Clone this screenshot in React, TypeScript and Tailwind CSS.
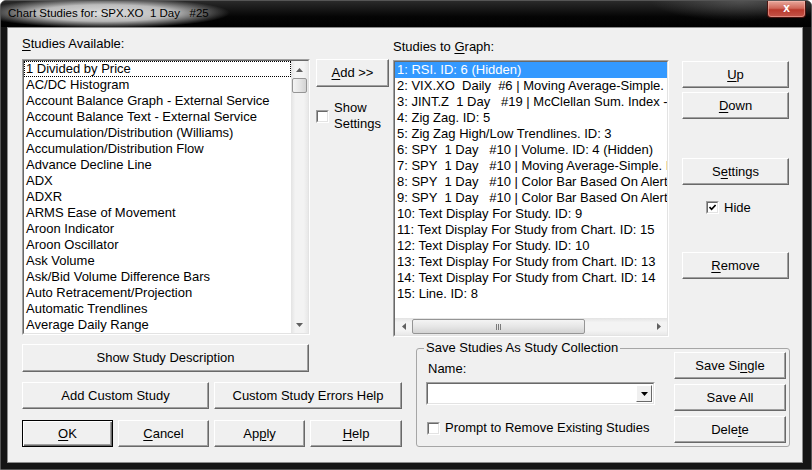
import type { ReactNode } from "react";

const AVAILABLE = [
  "1 Divided by Price",
  "AC/DC Histogram",
  "Account Balance Graph - External Service",
  "Account Balance Text - External Service",
  "Accumulation/Distribution (Williams)",
  "Accumulation/Distribution Flow",
  "Advance Decline Line",
  "ADX",
  "ADXR",
  "ARMS Ease of Movement",
  "Aroon Indicator",
  "Aroon Oscillator",
  "Ask Volume",
  "Ask/Bid Volume Difference Bars",
  "Auto Retracement/Projection",
  "Automatic Trendlines",
  "Average Daily Range",
  "Average True Range",
];

const GRAPHED = [
  "1: RSI. ID: 6 (Hidden)",
  "2: VIX.XO  Daily  #6 | Moving Average-Simple. ID: 7",
  "3: JINT.Z  1 Day   #19 | McClellan Sum. Index - Tick. ID: 11",
  "4: Zig Zag. ID: 5",
  "5: Zig Zag High/Low Trendlines. ID: 3",
  "6: SPY  1 Day   #10 | Volume. ID: 4 (Hidden)",
  "7: SPY  1 Day   #10 | Moving Average-Simple. ID: 2",
  "8: SPY  1 Day   #10 | Color Bar Based On Alert Condition. ID: 12",
  "9: SPY  1 Day   #10 | Color Bar Based On Alert Condition. ID: 16",
  "10: Text Display For Study. ID: 9",
  "11: Text Display For Study from Chart. ID: 15",
  "12: Text Display For Study. ID: 10",
  "13: Text Display For Study from Chart. ID: 13",
  "14: Text Display For Study from Chart. ID: 14",
  "15: Line. ID: 8",
];

// label with one underlined access-key letter
function Mn({ text, at }: { text: string; at?: number }) {
  if (at === undefined) return <>{text}</>;
  return (
    <>
      {text.slice(0, at)}
      <span className="underline underline-offset-[2px]">{text[at]}</span>
      {text.slice(at + 1)}
    </>
  );
}

function Btn({
  children,
  className = "",
  primary = false,
}: {
  children: ReactNode;
  className?: string;
  primary?: boolean;
}) {
  const edge = primary
    ? "border border-black shadow-[inset_1px_1px_0_#ffffff,inset_-1px_-1px_0_#696969,inset_-2px_-2px_0_#a0a0a0]"
    : "border border-t-white border-l-white border-r-[#696969] border-b-[#696969] shadow-[inset_-1px_-1px_0_#a0a0a0]";
  return (
    <button
      className={`flex shrink-0 items-center justify-center bg-[#f0f0f0] text-[13px] leading-[16px] text-black ${edge} ${className}`}
    >
      {children}
    </button>
  );
}

function Sunken({ className = "", children }: { className?: string; children?: ReactNode }) {
  return (
    <div
      className={`border border-t-[#a0a0a0] border-l-[#a0a0a0] border-r-white border-b-white ${className}`}
    >
      <div className="flex h-full w-full border border-t-[#696969] border-l-[#696969] border-r-[#e3e3e3] border-b-[#e3e3e3] bg-white">
        {children}
      </div>
    </div>
  );
}

function CheckBox({ checked = false }: { checked?: boolean }) {
  return (
    <div className="h-[13px] w-[13px] shrink-0 border border-t-[#a0a0a0] border-l-[#a0a0a0] border-r-white border-b-white">
      <div className="flex h-full w-full items-center justify-center border border-t-[#696969] border-l-[#696969] border-r-[#e3e3e3] border-b-[#e3e3e3] bg-white">
        {checked && (
          <svg width="7" height="7" viewBox="0 0 7 7">
            <path d="M0.5 3 L2.6 5.3 L6.6 1" fill="none" stroke="#000" strokeWidth="1.7" />
          </svg>
        )}
      </div>
    </div>
  );
}

function Arrow({ dir }: { dir: "up" | "down" | "left" | "right" }) {
  const d = {
    up: "M3.5 0 L7 4 H0 Z",
    down: "M0 0 H7 L3.5 4 Z",
    left: "M0 3.5 L4 0 V7 Z",
    right: "M0 0 L4 3.5 L0 7 Z",
  }[dir];
  const vertical = dir === "up" || dir === "down";
  return (
    <svg width={vertical ? 7 : 4} height={vertical ? 4 : 7} viewBox={vertical ? "0 0 7 4" : "0 0 4 7"}>
      <path d={d} fill="#606060" />
    </svg>
  );
}

function VScroll() {
  return (
    <div className="flex w-[17px] shrink-0 flex-col bg-[linear-gradient(to_right,#e3e3e3,#f3f3f3_25%,#f3f3f3_75%,#e8e8e8)]">
      <div className="flex h-[17px] items-center justify-center">
        <Arrow dir="up" />
      </div>
      <div className="mx-[1px] h-[15px] rounded-[2px] border border-[#959595] bg-[linear-gradient(to_right,#f4f4f4,#e6e6e6_50%,#d3d3d3)]" />
      <div className="flex-1" />
      <div className="flex h-[17px] items-center justify-center">
        <Arrow dir="down" />
      </div>
    </div>
  );
}

function HScroll() {
  return (
    <div className="flex h-[17px] shrink-0 bg-[linear-gradient(to_bottom,#e3e3e3,#f3f3f3_25%,#f3f3f3_75%,#e8e8e8)]">
      <div className="flex w-[17px] items-center justify-center">
        <Arrow dir="left" />
      </div>
      <div className="my-[1px] flex w-[173px] items-center justify-center gap-[1px] rounded-[2px] border border-[#959595] bg-[linear-gradient(to_bottom,#f4f4f4,#e6e6e6_50%,#d3d3d3)]">
        <span className="h-[6px] w-[1px] bg-[#7a7a7a]" />
        <span className="h-[6px] w-[1px] bg-[#7a7a7a]" />
        <span className="h-[6px] w-[1px] bg-[#7a7a7a]" />
      </div>
      <div className="flex-1" />
      <div className="flex w-[17px] items-center justify-center">
        <Arrow dir="right" />
      </div>
    </div>
  );
}

export default function App() {
  return (
    <div className="flex h-[470px] w-[812px] flex-col overflow-hidden rounded-t-[6px] border border-[#555] bg-[#151515] font-['Liberation_Sans',Arial,sans-serif] text-black">
      {/* title bar */}
      <div className="flex h-[26px] shrink-0 bg-[radial-gradient(ellipse_125px_15px_at_104px_12px,rgba(228,228,228,0.97),rgba(215,215,215,0.85)_55%,rgba(0,0,0,0)_100%),radial-gradient(ellipse_90px_20px_at_740px_0px,rgba(120,120,120,0.5),rgba(0,0,0,0)_100%),linear-gradient(to_bottom,#2a2a2a,#050505_60%,#000)]">
        <span className="whitespace-pre pl-[7px] pt-[5px] text-[11.5px] leading-[14px] text-black">
          Chart Studies for: SPX.XO  1 Day   #25
        </span>
        <div className="ml-auto mr-[5px] flex h-[17px] w-[39px] items-center justify-center rounded-b-[4px] border border-t-0 border-[#4a1410] bg-[linear-gradient(to_bottom,#e8a89c,#d0685a_45%,#b8392c_55%,#c4554a)] shadow-[inset_0_0_0_1px_rgba(255,200,190,0.45)]">
          <span className="mt-[-2px] text-[12px] font-bold leading-[12px] text-white">x</span>
        </div>
      </div>

      {/* client area */}
      <div className="ml-[6px] h-[436px] w-[796px] shrink-0 border border-[#8c8c8c] bg-[#f0f0f0] text-[13px] leading-[16px]">
        <div className="flex h-[309px]">
          {/* studies available */}
          <div className="ml-[14px] flex w-[288px] flex-col pt-[8px]">
            <div className="mb-[7px] h-[16px]">
              <Mn text="Studies Available:" at={0} />
            </div>
            <Sunken className="h-[276px]">
              <div className="flex-1 overflow-hidden">
                {AVAILABLE.map((s, i) => (
                  <div
                    key={s}
                    className={`h-[16px] whitespace-pre border px-[1px] ${
                      i === 0 ? "border-dotted border-black" : "border-transparent"
                    }`}
                  >
                    <span className="relative top-[-1px]">{s}</span>
                  </div>
                ))}
              </div>
              <VScroll />
            </Sunken>
          </div>

          {/* add column */}
          <div className="ml-[6px] flex w-[73px] flex-col pt-[31px]">
            <Btn className="h-[28px] w-[73px]">
              <Mn text="Add >>" at={0} />
            </Btn>
            <div className="mt-[13px] flex items-start">
              <div className="mt-[10px]">
                <CheckBox />
              </div>
              <div className="ml-[5px]">
                Show
                <br />
                Settings
              </div>
            </div>
          </div>

          {/* studies to graph */}
          <div className="ml-[4px] flex w-[276px] flex-col pt-[11px]">
            <div className="mb-[5px] h-[16px]">
              <Mn text="Studies to Graph:" at={11} />
            </div>
            <Sunken className="h-[277px]">
              <div className="flex min-w-0 flex-1 flex-col">
                <div className="flex-1 overflow-hidden">
                  {GRAPHED.map((s, i) => (
                    <div
                      key={s}
                      className={`h-[16px] whitespace-pre px-[2px] ${
                        i === 0 ? "bg-[#3399ff] text-white" : ""
                      }`}
                    >
                      {s}
                    </div>
                  ))}
                </div>
                <HScroll />
              </div>
            </Sunken>
          </div>

          {/* order / settings buttons */}
          <div className="ml-[13px] flex w-[107px] flex-col pt-[33px]">
            <Btn className="h-[27px] w-[107px]">
              <Mn text="Up" at={0} />
            </Btn>
            <Btn className="mt-[4px] h-[27px] w-[107px]">
              <Mn text="Down" at={0} />
            </Btn>
            <Btn className="mt-[39px] h-[27px] w-[107px]">
              <Mn text="Settings" at={1} />
            </Btn>
            <div className="ml-[24px] mt-[15px] flex h-[15px] items-center">
              <CheckBox checked />
              <span className="ml-[5px]">Hide</span>
            </div>
            <Btn className="mt-[37px] h-[27px] w-[107px]">
              <Mn text="Remove" at={0} />
            </Btn>
          </div>
        </div>

        <div className="mt-[3px] flex items-start">
          {/* description / custom study / dialog buttons */}
          <div className="ml-[14px] mt-[4px] flex w-[380px] flex-col">
            <Btn className="h-[28px] w-[287px]">Show Study Description</Btn>
            <div className="mt-[10px] flex gap-[5px]">
              <Btn className="h-[27px] w-[187px]">Add Custom Study</Btn>
              <Btn className="h-[27px] w-[188px]">Custom Study Errors Help</Btn>
            </div>
            <div className="mt-[11px] flex gap-[5px]">
              <Btn primary className="h-[27px] w-[91px]">
                <Mn text="OK" at={0} />
              </Btn>
              <Btn className="h-[27px] w-[91px]">
                <Mn text="Cancel" at={0} />
              </Btn>
              <Btn className="h-[27px] w-[91px]">
                <Mn text="Apply" at={2} />
              </Btn>
              <Btn className="h-[27px] w-[92px]">
                <Mn text="Help" at={0} />
              </Btn>
            </div>
          </div>

          {/* study collection group */}
          <fieldset className="ml-[14px] w-[374px] rounded-[3px] border border-[#a6a6a6] pb-[3px] pl-[7px] pr-[3px]">
            <legend className="px-[2px] leading-[16px]">Save Studies As Study Collection</legend>
            <div className="flex items-start">
              <div className="flex w-[231px] flex-col">
                <div className="ml-[4px] mt-[5px] h-[16px]">Name:</div>
                <Sunken className="ml-[2px] mt-[5px] h-[23px] w-[229px]">
                  <div className="flex-1" />
                  <div className="m-[1px] flex w-[16px] items-center justify-center border border-t-white border-l-white border-r-[#696969] border-b-[#696969] bg-[#f0f0f0]">
                    <svg width="7" height="4" viewBox="0 0 7 4">
                      <path d="M0 0 H7 L3.5 4 Z" fill="#000" />
                    </svg>
                  </div>
                </Sunken>
                <div className="ml-[3px] mt-[15px] flex h-[16px] items-center">
                  <CheckBox />
                  <span className="ml-[5px]">Prompt to Remove Existing Studies</span>
                </div>
              </div>
              <div className="ml-[19px] mt-[-4px] flex w-[112px] flex-col gap-[5px]">
                <Btn className="h-[27px] w-[112px]">
                  <Mn text="Save Single" at={7} />
                </Btn>
                <Btn className="h-[27px] w-[112px]">Save All</Btn>
                <Btn className="h-[27px] w-[112px]">
                  <Mn text="Delete" at={4} />
                </Btn>
              </div>
            </div>
          </fieldset>
        </div>
      </div>
    </div>
  );
}
